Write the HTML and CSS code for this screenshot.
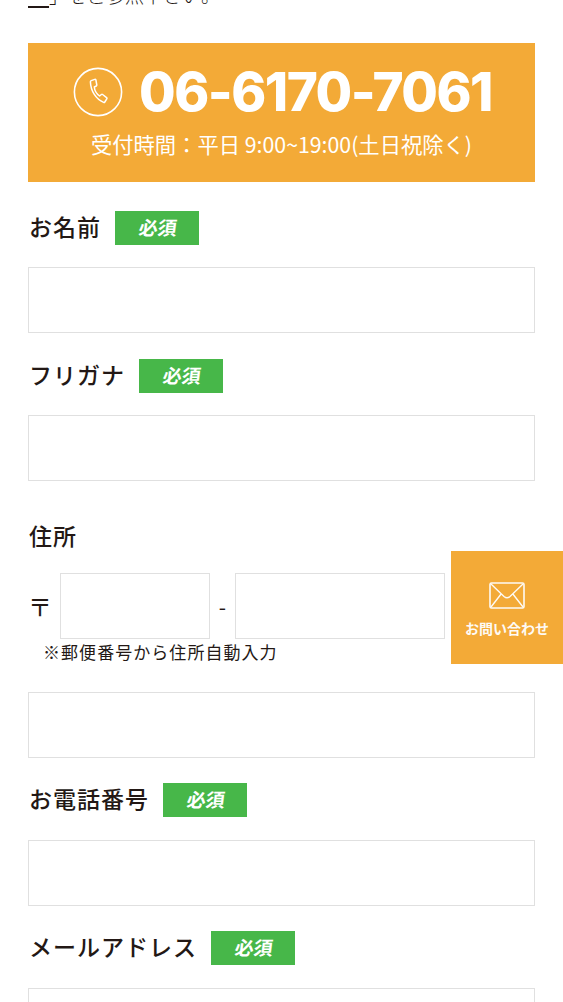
FILE: index.html
```html
<!DOCTYPE html>
<html lang="ja">
<head>
<meta charset="utf-8">
<title>お問い合わせ</title>
<link rel="stylesheet" href="styles.css">
</head>
<body>
<main class="page">
  <p class="intro"><a class="intro-link" href="#">　</a>」をご参照下さい。</p>
  <section class="tel">
    <div class="tel-main">
      <svg class="tel-icon" viewBox="0 0 50 50" aria-hidden="true">
        <circle cx="25" cy="25" r="23.6" fill="none" stroke="#fff" stroke-width="1.6"/>
        <path d="M18.2 13.6l3.6-1.2c.6-.2 1 .1 1.1.6l.9 5c.1.5-.1.8-.5 1l-2 1c.3 3.400 2.300 6.900 5.300 9l1.800-1.500c.4-.3.8-.3 1.200 0l4 3.100c.4.300.5.800.2 1.200l-2 3.200c-.3.500-.7.600-1.200.4-7.500-3.100-12.900-11.200-13.200-20.700 0-.6.200-.9.800-1.100z" fill="none" stroke="#fff" stroke-width="1.500" stroke-linejoin="round"/>
      </svg>
      <span class="tel-number">06-6170-7061</span>
    </div>
    <p class="tel-hours">受付時間：平日 9:00~19:00(土日祝除く)</p>
  </section>

  <div class="field">
    <div class="label-row"><span class="label">お名前</span><span class="badge"><span class="badge-text">必須</span></span></div>
    <div class="input"></div>
  </div>
  <div class="field">
    <div class="label-row"><span class="label">フリガナ</span><span class="badge"><span class="badge-text">必須</span></span></div>
    <div class="input"></div>
  </div>
  <div class="field field-address">
    <div class="label-row"><span class="label">住所</span></div>
    <div class="zip-row">
      <span class="zip-mark">〒</span>
      <div class="input zip-a"></div>
      <span class="zip-dash">-</span>
      <div class="input zip-b"></div>
    </div>
    <p class="zip-note">※郵便番号から住所自動入力</p>
    <div class="input address-input"></div>
  </div>
  <div class="field field-lower">
    <div class="label-row"><span class="label">お電話番号</span><span class="badge"><span class="badge-text">必須</span></span></div>
    <div class="input"></div>
  </div>
  <div class="field field-lower">
    <div class="label-row"><span class="label">メールアドレス</span><span class="badge"><span class="badge-text">必須</span></span></div>
    <div class="input"></div>
  </div>
</main>
<a class="float" href="#">
  <svg class="float-icon" viewBox="0 0 36 27" aria-hidden="true">
    <rect x="1" y="1" width="34" height="25" rx="1.500" fill="none" stroke="#fff" stroke-width="1.600"/>
    <path d="M2 2l13 12.500c1.800 1.600 4.200 1.600 6 0L34 2M2 25l10.500-13.500M34 25L23.500 11.500" fill="none" stroke="#fff" stroke-width="1.400"/>
  </svg>
  <span class="float-text">お問い合わせ</span>
</a>
</body>
</html>
```
FILE: styles.css
```css
* { box-sizing: border-box; }
html, body {
  margin: 0;
  height: 1002px;
  overflow: hidden;
  background: #fff;
}
body {
  position: relative;
  font-family: "Noto Sans CJK JP", "Noto Sans", sans-serif;
  color: #231815;
}
.page {
  padding: 0 28px;
}
.intro {
  margin: -18px 0 0;
  height: 26px;
  font-size: 19px;
  line-height: 26px;
  font-weight: 300;
  white-space: nowrap;
}
.intro-link {
  color: inherit;
  letter-spacing: 2px;
  text-decoration: underline;
  text-decoration-thickness: 2px;
  text-underline-offset: 3px;
}
.tel {
  margin-top: 35px;
  height: 139px;
  background: #f3aa37;
  color: #fff;
  padding-top: 21px;
  text-align: center;
}
.tel-main {
  display: flex;
  justify-content: center;
  align-items: center;
  gap: 16px;
  height: 56px;
  padding-left: 2px;
}
.tel-icon {
  width: 50px;
  height: 50px;
  flex: none;
}
.tel-number {
  font-family: Inter, "Liberation Sans", sans-serif;
  font-size: 53px;
  font-weight: 800;
  line-height: 56px;
  letter-spacing: -1.500px;
}
.tel-hours {
  margin: 9px 0 0;
  font-size: 21.300px;
  line-height: 30px;
  font-weight: 400;
}
.field {
  margin-top: 26px;
}
.tel + .field {
  margin-top: 29px;
}
.field-lower {
  margin-top: 25px;
}
.field-lower .input {
  margin-top: 23px;
}
.label-row {
  display: flex;
  align-items: center;
  height: 34px;
  gap: 14px;
}
.label {
  font-size: 23px;
  letter-spacing: 1px;
  font-weight: 500;
  line-height: 30px;
  padding-left: 1px;
  margin-bottom: 4px;
}
.badge {
  width: 84px;
  height: 34px;
  padding-left: 2px;
  background: #47b749;
  color: #fff;
  font-size: 19px;
  font-weight: 700;
  line-height: 31px;
  text-align: center;
}
.badge-text {
  display: inline-block;
  transform: skewX(-7deg);
}
.input {
  height: 66px;
  margin-top: 22px;
  border: 1px solid #e0e0e0;
  background: #fff;
}
.field-address {
  margin-top: 39px;
}
.zip-row {
  display: flex;
  align-items: center;
  margin-top: 19px;
}
.zip-row .input {
  margin-top: 0;
}
.zip-mark {
  width: 32px;
  font-size: 24px;
  line-height: 66px;
}
.zip-a {
  width: 150px;
}
.zip-dash {
  width: 25px;
  text-align: center;
  font-size: 21px;
  line-height: 66px;
  font-weight: 400;
}
.zip-b {
  width: 210px;
}
.zip-note {
  margin: 0;
  padding-left: 15px;
  font-size: 17px;
  line-height: 26px;
  font-weight: 400;
  letter-spacing: 1.050px;
}
.address-input {
  margin-top: 27px;
}
.float {
  position: absolute;
  left: 451px;
  top: 551px;
  width: 112px;
  height: 113px;
  background: #f3aa37;
  color: #fff;
  display: flex;
  flex-direction: column;
  align-items: center;
  padding-top: 31px;
  text-decoration: none;
}
.float-icon {
  width: 36px;
  height: 27px;
  opacity: .95;
}
.float-text {
  margin-top: 9px;
  font-size: 14px;
  line-height: 20px;
  font-weight: 700;
  opacity: .95;
}
```
